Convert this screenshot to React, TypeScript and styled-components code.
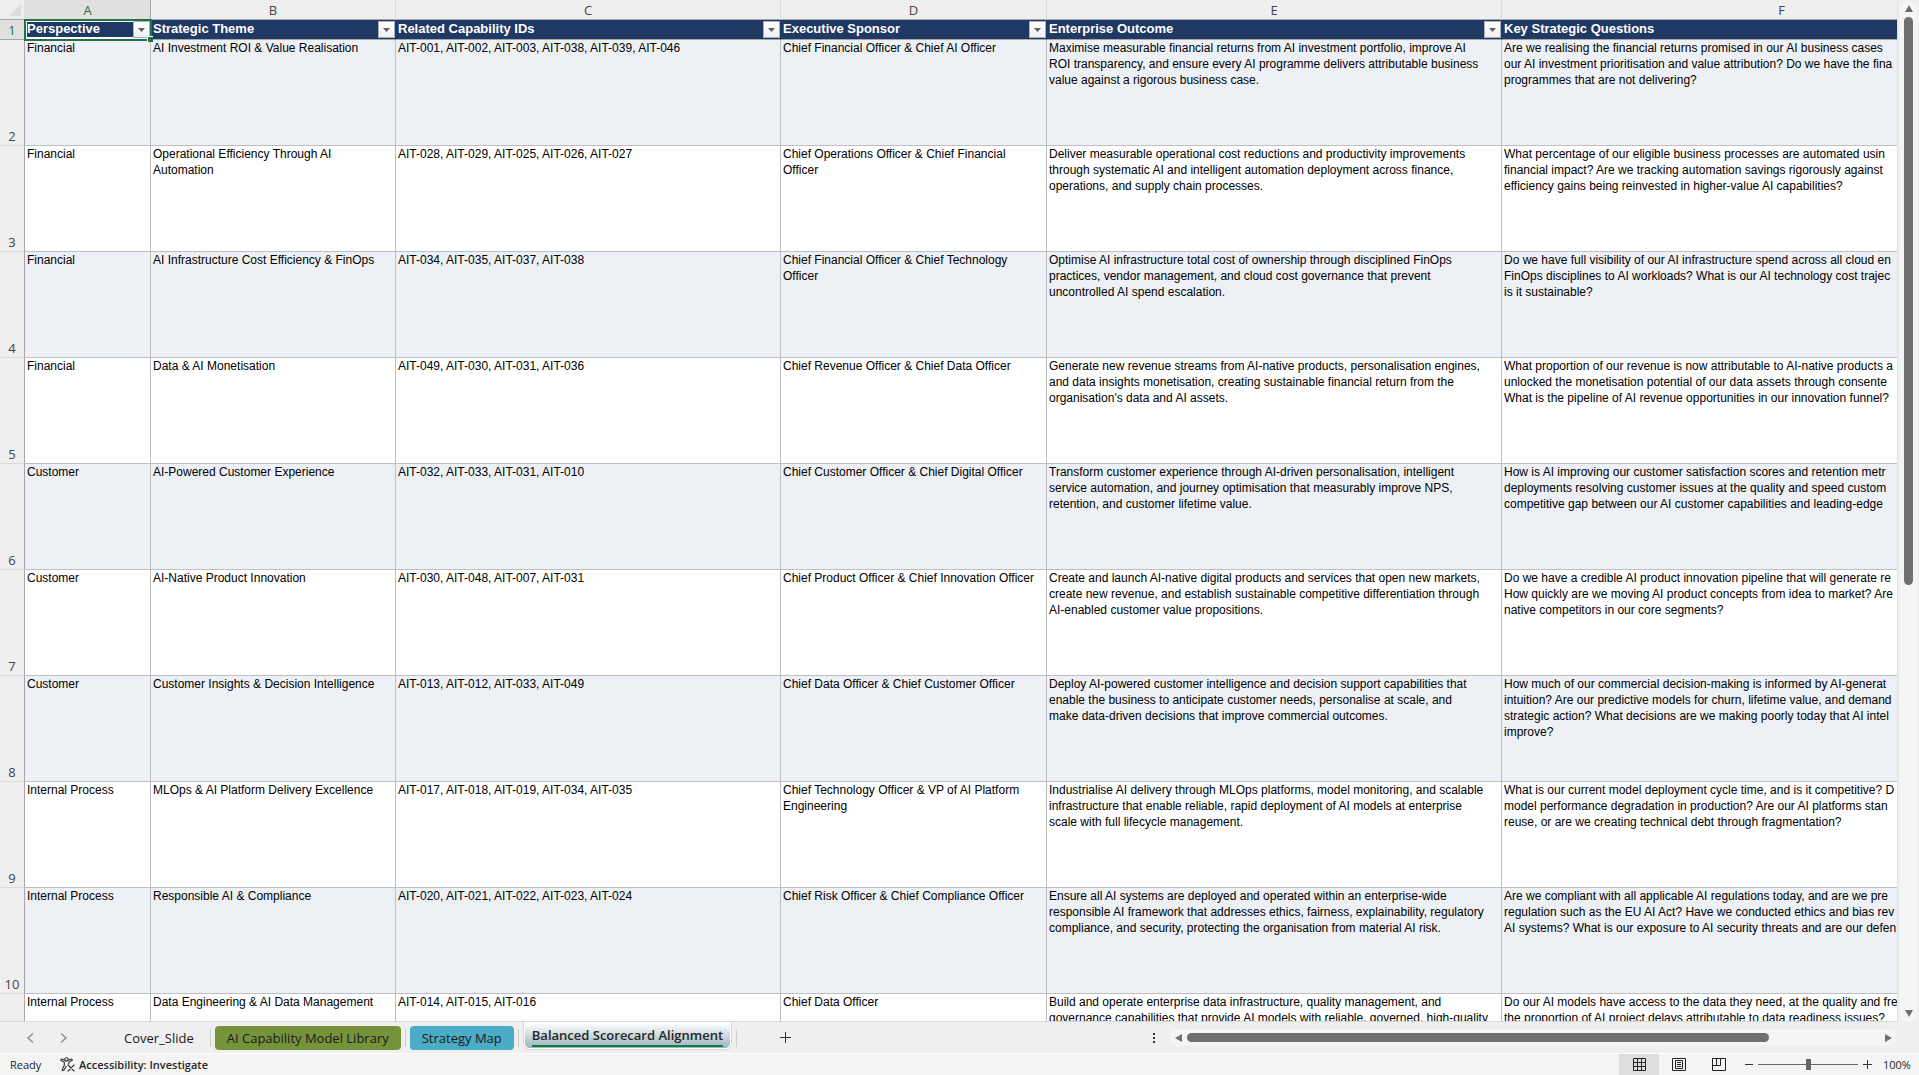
import React from "react";
import styled, { createGlobalStyle } from "styled-components";

const GlobalStyle = createGlobalStyle`
  * { box-sizing: border-box; }
  body { margin: 0; background: #efefef; overflow: hidden; }
  button { font: inherit; color: inherit; border: 0; padding: 0; background: none; }
`;

const UI_FONT = `"Open Sans", "Noto Sans", sans-serif`;
const CELL_FONT = `"Liberation Sans", Arial, sans-serif`;

const Window = styled.div`
  display: flex;
  flex-direction: column;
  height: 100vh;
  font-family: ${UI_FONT};
  color: #262626;
`;

const SheetArea = styled.main`
  display: flex;
  flex: 1;
  min-height: 0;
`;

const GridPane = styled.div`
  flex: 1;
  min-width: 0;
  overflow: hidden;
  background: #fff;
  border-right: 1px solid #e1e1e1;
  border-bottom: 1px solid #d9d9d9;
`;

const Grid = styled.table`
  table-layout: fixed;
  width: 2062px;
  border-collapse: separate;
  border-spacing: 0;
`;

const Col = styled.col<{ $w: number }>`
  width: ${(p) => p.$w}px;
`;

const Corner = styled.td`
  height: 20px;
  padding: 0 3px 3px 0;
  background: #efefef;
  border-right: 1px solid #dcdcdc;
  border-bottom: 1px solid #a6a6a6;
  line-height: 0;
  text-align: right;
  vertical-align: bottom;
`;

const ColumnLetter = styled.th<{ $active?: boolean }>`
  height: 20px;
  padding: 2px 0 0;
  font-size: 13px;
  line-height: 17px;
  font-weight: 400;
  color: ${(p) => (p.$active ? "#217346" : "#444")};
  background: ${(p) => (p.$active ? "#e0e0e0" : "#efefef")};
  border-right: 1px solid ${(p) => (p.$active ? "#a6a6a6" : "#dcdcdc")};
  border-bottom: 1px solid ${(p) => (p.$active ? "#217346" : "#a6a6a6")};
`;

const RowNumber = styled.th<{ $active?: boolean }>`
  padding: 0 0 0 0;
  font-size: 13px;
  line-height: 17px;
  font-weight: 400;
  vertical-align: bottom;
  color: ${(p) => (p.$active ? "#217346" : "#444")};
  background: ${(p) => (p.$active ? "#e0e0e0" : "#efefef")};
  border-right: 1px solid #a6a6a6;
  border-bottom: 1px solid ${(p) => (p.$active ? "#a6a6a6" : "#dcdcdc")};
`;

const FieldHead = styled.th<{ $selected?: boolean }>`
  position: relative;
  height: 20px;
  padding: 0 0 0 2px;
  background: #203864;
  border-bottom: 1px solid #a6a6a6;
  border-right: 1px solid #203864;
  ${(p) => p.$selected && "outline: 2px solid #217346; outline-offset: -1px; z-index: 1; box-shadow: inset 0 0 0 2px #fff;"}
`;

const FieldHeadInner = styled.div`
  display: flex;
  align-items: center;
  justify-content: space-between;
  height: 19px;
  color: #fff;
  font-family: ${CELL_FONT};
  font-size: 13px;
  line-height: 17px;
  font-weight: 700;
  white-space: nowrap;
`;

const FieldName = styled.span`
  align-self: flex-start;
  line-height: 17px;
`;

const FilterButton = styled.button`
  display: grid;
  place-items: center;
  width: 17px;
  height: 17px;
  background: linear-gradient(#fff, #eef0f4);
  border: 1px solid #a9b0bd;
`;

const FillHandle = styled.span`
  position: absolute;
  right: -3px;
  bottom: -3px;
  width: 6px;
  height: 6px;
  background: #217346;
  border-left: 1px solid #fff;
  border-top: 1px solid #fff;
`;

const Cell = styled.td<{ $band: boolean }>`
  height: 106px;
  padding: 0 0 0 2px;
  vertical-align: top;
  overflow: hidden;
  white-space: pre;
  font-family: ${CELL_FONT};
  font-size: 12px;
  line-height: 16px;
  color: #000;
  background: ${(p) => (p.$band ? "#edf1f6" : "#fff")};
  border-right: 1px solid #bfbfbf;
  border-bottom: 1px solid #bfbfbf;
`;

const VerticalBar = styled.div`
  display: flex;
  flex-direction: column;
  align-items: center;
  justify-content: space-between;
  width: 17px;
  margin: 1px 2px 0 2px;
  padding: 3px 0 4px;
  background: #f5f5f5;
  border-radius: 8px;
`;

const VerticalTrack = styled.div`
  flex: 1;
  padding: 3px 0;
`;

const VerticalThumb = styled.div`
  width: 9px;
  height: 57.5%;
  background: #707070;
  border-radius: 5px;
`;

const ArrowButton = styled.button`
  display: grid;
  place-items: center;
`;

const TabBar = styled.nav`
  display: flex;
  align-items: center;
  height: 31px;
  background: #efefef;
`;

const TabNav = styled.div`
  display: flex;
  gap: 20px;
  width: 112px;
  padding-left: 24px;
`;

const Tab = styled.button<{ $fill?: string }>`
  height: 24px;
  padding: 0 12px;
  font-size: 13px;
  line-height: 24px;
  color: #1a1a1a;
  white-space: nowrap;
  background: ${(p) => p.$fill || "transparent"};
  border-radius: 4px;
`;

const Divider = styled.span`
  width: 1px;
  height: 18px;
  margin: 0 4px;
  background: #cfcfcf;
`;

const ActiveTab = styled.button`
  align-self: flex-start;
  height: 27px;
  margin: 0 1px;
  padding: 1px 7px 0;
  background: linear-gradient(#fff, #9db3bd);
  border: 1px solid #fff;
  border-radius: 0 0 6px 6px;
  box-shadow: 0 0 0 1px #d9d9d9;
  font-size: 13px;
  line-height: 20px;
  font-weight: 600;
  color: #262626;
  white-space: nowrap;
`;

const ActiveLabel = styled.span`
  display: block;
  height: 22px;
  border-bottom: 2px solid #107c41;
`;

const AddButton = styled(ArrowButton)`
  margin-left: 39px;
`;

const HorizontalGroup = styled.div`
  display: flex;
  align-items: center;
  width: 767px;
  margin-left: auto;
  padding-right: 22px;
`;

const HorizontalBar = styled.div`
  display: flex;
  flex: 1;
  align-items: center;
  height: 17px;
  margin-left: 14px;
  padding: 0 4px;
  background: #f5f5f5;
  border-radius: 8px;
`;

const HorizontalTrack = styled.div`
  flex: 1;
  padding: 0 3px;
`;

const HorizontalThumb = styled.div`
  width: 84%;
  height: 9px;
  background: #707070;
  border-radius: 5px;
`;

const StatusBar = styled.footer`
  display: flex;
  align-items: center;
  height: 22px;
  background: #f4f4f4;
  border-top: 1px solid #fff;
  font-size: 11px;
  line-height: 20px;
`;

const Ready = styled.span`
  width: 60px;
  padding-left: 10px;
`;

const Accessibility = styled.button`
  display: flex;
  align-items: center;
  gap: 4px;
  font-weight: 600;
`;

const ViewControls = styled.div`
  display: flex;
  align-items: center;
  height: 100%;
  margin-left: auto;
`;

const ViewButton = styled.button<{ $on?: boolean }>`
  display: grid;
  place-items: center;
  width: 40px;
  height: 100%;
  background: ${(p) => (p.$on ? "#dedede" : "transparent")};
`;

const ZoomButton = styled(ArrowButton)`
  width: 19px;
`;

const ZoomSlider = styled.input`
  appearance: none;
  width: 100px;
  height: 12px;
  margin: 0;
  background: linear-gradient(#666, #666) center / 100% 1px no-repeat;
  &::-webkit-slider-thumb {
    appearance: none;
    width: 5px;
    height: 11px;
    background: #666;
  }
`;

const ZoomValue = styled.span`
  width: 42px;
  padding-left: 6px;
`;

const fields = [
  { letter: "A", name: "Perspective", width: 126 },
  { letter: "B", name: "Strategic Theme", width: 245 },
  { letter: "C", name: "Related Capability IDs", width: 385 },
  { letter: "D", name: "Executive Sponsor", width: 266 },
  { letter: "E", name: "Enterprise Outcome", width: 455 },
  { letter: "F", name: "Key Strategic Questions", width: 560 },
];

const rows: string[][] = [
  ["Financial", "AI Investment ROI & Value Realisation", "AIT-001, AIT-002, AIT-003, AIT-038, AIT-039, AIT-046", "Chief Financial Officer & Chief AI Officer",
    "Maximise measurable financial returns from AI investment portfolio, improve AI\nROI transparency, and ensure every AI programme delivers attributable business\nvalue against a rigorous business case.",
    "Are we realising the financial returns promised in our AI business cases\nour AI investment prioritisation and value attribution? Do we have the fina\nprogrammes that are not delivering?"],
  ["Financial", "Operational Efficiency Through AI\nAutomation", "AIT-028, AIT-029, AIT-025, AIT-026, AIT-027", "Chief Operations Officer & Chief Financial\nOfficer",
    "Deliver measurable operational cost reductions and productivity improvements\nthrough systematic AI and intelligent automation deployment across finance,\noperations, and supply chain processes.",
    "What percentage of our eligible business processes are automated usin\nfinancial impact? Are we tracking automation savings rigorously against\nefficiency gains being reinvested in higher-value AI capabilities?"],
  ["Financial", "AI Infrastructure Cost Efficiency & FinOps", "AIT-034, AIT-035, AIT-037, AIT-038", "Chief Financial Officer & Chief Technology\nOfficer",
    "Optimise AI infrastructure total cost of ownership through disciplined FinOps\npractices, vendor management, and cloud cost governance that prevent\nuncontrolled AI spend escalation.",
    "Do we have full visibility of our AI infrastructure spend across all cloud en\nFinOps disciplines to AI workloads? What is our AI technology cost trajec\nis it sustainable?"],
  ["Financial", "Data & AI Monetisation", "AIT-049, AIT-030, AIT-031, AIT-036", "Chief Revenue Officer & Chief Data Officer",
    "Generate new revenue streams from AI-native products, personalisation engines,\nand data insights monetisation, creating sustainable financial return from the\norganisation's data and AI assets.",
    "What proportion of our revenue is now attributable to AI-native products a\nunlocked the monetisation potential of our data assets through consente\nWhat is the pipeline of AI revenue opportunities in our innovation funnel?"],
  ["Customer", "AI-Powered Customer Experience", "AIT-032, AIT-033, AIT-031, AIT-010", "Chief Customer Officer & Chief Digital Officer",
    "Transform customer experience through AI-driven personalisation, intelligent\nservice automation, and journey optimisation that measurably improve NPS,\nretention, and customer lifetime value.",
    "How is AI improving our customer satisfaction scores and retention metr\ndeployments resolving customer issues at the quality and speed custom\ncompetitive gap between our AI customer capabilities and leading-edge"],
  ["Customer", "AI-Native Product Innovation", "AIT-030, AIT-048, AIT-007, AIT-031", "Chief Product Officer & Chief Innovation Officer",
    "Create and launch AI-native digital products and services that open new markets,\ncreate new revenue, and establish sustainable competitive differentiation through\nAI-enabled customer value propositions.",
    "Do we have a credible AI product innovation pipeline that will generate re\nHow quickly are we moving AI product concepts from idea to market? Are\nnative competitors in our core segments?"],
  ["Customer", "Customer Insights & Decision Intelligence", "AIT-013, AIT-012, AIT-033, AIT-049", "Chief Data Officer & Chief Customer Officer",
    "Deploy AI-powered customer intelligence and decision support capabilities that\nenable the business to anticipate customer needs, personalise at scale, and\nmake data-driven decisions that improve commercial outcomes.",
    "How much of our commercial decision-making is informed by AI-generat\nintuition? Are our predictive models for churn, lifetime value, and demand\nstrategic action? What decisions are we making poorly today that AI intel\nimprove?"],
  ["Internal Process", "MLOps & AI Platform Delivery Excellence", "AIT-017, AIT-018, AIT-019, AIT-034, AIT-035", "Chief Technology Officer & VP of AI Platform\nEngineering",
    "Industrialise AI delivery through MLOps platforms, model monitoring, and scalable\ninfrastructure that enable reliable, rapid deployment of AI models at enterprise\nscale with full lifecycle management.",
    "What is our current model deployment cycle time, and is it competitive? D\nmodel performance degradation in production? Are our AI platforms stan\nreuse, or are we creating technical debt through fragmentation?"],
  ["Internal Process", "Responsible AI & Compliance", "AIT-020, AIT-021, AIT-022, AIT-023, AIT-024", "Chief Risk Officer & Chief Compliance Officer",
    "Ensure all AI systems are deployed and operated within an enterprise-wide\nresponsible AI framework that addresses ethics, fairness, explainability, regulatory\ncompliance, and security, protecting the organisation from material AI risk.",
    "Are we compliant with all applicable AI regulations today, and are we pre\nregulation such as the EU AI Act? Have we conducted ethics and bias rev\nAI systems? What is our exposure to AI security threats and are our defen"],
  ["Internal Process", "Data Engineering & AI Data Management", "AIT-014, AIT-015, AIT-016", "Chief Data Officer",
    "Build and operate enterprise data infrastructure, quality management, and\ngovernance capabilities that provide AI models with reliable, governed, high-quality",
    "Do our AI models have access to the data they need, at the quality and fre\nthe proportion of AI project delays attributable to data readiness issues?"],
];

const arrowPaths = {
  up: "M5 1 L9 8 H1 Z",
  down: "M1 2 H9 L5 9 Z",
  left: "M1 5 L8 1 V9 Z",
  right: "M9 5 L2 1 V9 Z",
};

function Arrow({ dir }: { dir: keyof typeof arrowPaths }) {
  return (
    <svg width="10" height="10" viewBox="0 0 10 10">
      <path d={arrowPaths[dir]} fill="#707070" />
    </svg>
  );
}

function Chevron({ flip }: { flip?: boolean }) {
  return (
    <svg width="13" height="12" viewBox="0 0 13 12" fill="none" stroke="#8f8f8f" strokeWidth="1.5">
      <path d={flip ? "M4 1.5 L9 6 L4 10.5" : "M9 1.5 L4 6 L9 10.5"} />
    </svg>
  );
}

function AccessibilityIcon() {
  return (
    <svg width="15" height="15" viewBox="0 0 15 15" fill="none" stroke="#333" strokeWidth="1.1" strokeLinecap="round" strokeLinejoin="round">
      <circle cx="6.5" cy="2.4" r="1.7" />
      <path d="M4.8 3.2 L2 2 Q.5 2 .8 3.2 L4.3 5.2 V8.3 L2.2 12.6 Q2.4 14.2 3.7 13.4 L6.2 9.3" />
      <path d="M8.2 3.2 L11.2 2 Q12.7 2 12.2 3.2 L8.8 5.2 V7" />
      <path d="M8 8 L14 14 M14 8 L8 14" />
    </svg>
  );
}

export default function App() {
  return (
    <Window>
      <GlobalStyle />
      <SheetArea>
        <GridPane>
          <Grid>
            <colgroup>
              <Col $w={25} />
              {fields.map((f) => <Col key={f.letter} $w={f.width} />)}
            </colgroup>
            <thead>
              <tr>
                <Corner>
                  <svg width="12" height="12" viewBox="0 0 12 12"><path d="M12 0 V12 H0 Z" fill="#dcdcdc" /></svg>
                </Corner>
                {fields.map((f, i) => (
                  <ColumnLetter key={f.letter} scope="col" $active={i === 0}>{f.letter}</ColumnLetter>
                ))}
              </tr>
              <tr>
                <RowNumber scope="row" $active>1</RowNumber>
                {fields.map((f, i) => (
                  <FieldHead key={f.letter} scope="col" $selected={i === 0}>
                    <FieldHeadInner>
                      <FieldName>{f.name}</FieldName>
                      <FilterButton aria-label={`Filter ${f.name}`}>
                        <svg width="7" height="4" viewBox="0 0 7 4"><path d="M0 0 H7 L3.5 4 Z" fill="#606060" /></svg>
                      </FilterButton>
                    </FieldHeadInner>
                    {i === 0 && <FillHandle />}
                  </FieldHead>
                ))}
              </tr>
            </thead>
            <tbody>
              {rows.map((row, r) => (
                <tr key={r}>
                  <RowNumber scope="row">{r + 2}</RowNumber>
                  {row.map((text, c) => <Cell key={c} $band={r % 2 === 0}>{text}</Cell>)}
                </tr>
              ))}
            </tbody>
          </Grid>
        </GridPane>
        <VerticalBar>
          <ArrowButton aria-label="Scroll up"><Arrow dir="up" /></ArrowButton>
          <VerticalTrack><VerticalThumb /></VerticalTrack>
          <ArrowButton aria-label="Scroll down"><Arrow dir="down" /></ArrowButton>
        </VerticalBar>
      </SheetArea>
      <TabBar aria-label="Sheets">
        <TabNav>
          <ArrowButton aria-label="Previous sheet"><Chevron /></ArrowButton>
          <ArrowButton aria-label="Next sheet"><Chevron flip /></ArrowButton>
        </TabNav>
        <Tab>Cover_Slide</Tab>
        <Divider />
        <Tab $fill="#76933c">AI Capability Model Library</Tab>
        <Divider />
        <Tab $fill="#4bacc6">Strategy Map</Tab>
        <Divider />
        <ActiveTab><ActiveLabel>Balanced Scorecard Alignment</ActiveLabel></ActiveTab>
        <Divider />
        <AddButton aria-label="New sheet">
          <svg width="11" height="11" viewBox="0 0 11 11" stroke="#333"><path d="M5.5 0 V11 M0 5.5 H11" /></svg>
        </AddButton>
        <HorizontalGroup>
          <svg width="4" height="12" viewBox="0 0 4 12" fill="#333"><path d="M1 1h2v2H1zM1 5h2v2H1zM1 9h2v2H1z" /></svg>
          <HorizontalBar>
            <ArrowButton aria-label="Scroll left"><Arrow dir="left" /></ArrowButton>
            <HorizontalTrack><HorizontalThumb /></HorizontalTrack>
            <ArrowButton aria-label="Scroll right"><Arrow dir="right" /></ArrowButton>
          </HorizontalBar>
        </HorizontalGroup>
      </TabBar>
      <StatusBar>
        <Ready>Ready</Ready>
        <Accessibility><AccessibilityIcon />Accessibility: Investigate</Accessibility>
        <ViewControls>
          <ViewButton $on aria-label="Normal view">
            <svg width="13" height="13" viewBox="0 0 13 13" fill="none" stroke="#222"><path d="M.5 .5h12v12H.5zM4.5 0v13M8.5 0v13M0 4.5h13M0 8.5h13" /></svg>
          </ViewButton>
          <ViewButton aria-label="Page layout view">
            <svg width="14" height="13" viewBox="0 0 14 13" fill="none" stroke="#222"><path d="M.5 .5h13v12H.5zM3.5 2.5h7v8h-7zM5 4.5h4M5 6.5h4M5 8.5h4" /></svg>
          </ViewButton>
          <ViewButton aria-label="Page break preview">
            <svg width="14" height="13" viewBox="0 0 14 13" fill="none" stroke="#222"><path d="M.5 .5h13v12H.5zM.5 7.5h8M8.5 .5v7M4.5 .5v7" /></svg>
          </ViewButton>
          <ZoomButton aria-label="Zoom out"><svg width="8" height="9" stroke="#333"><path d="M0 4.5H8" /></svg></ZoomButton>
          <ZoomSlider type="range" aria-label="Zoom" min={0} max={200} defaultValue={101} />
          <ZoomButton aria-label="Zoom in"><svg width="9" height="9" stroke="#333"><path d="M0 4.5H9M4.5 0V9" /></svg></ZoomButton>
          <ZoomValue>100%</ZoomValue>
        </ViewControls>
      </StatusBar>
    </Window>
  );
}
